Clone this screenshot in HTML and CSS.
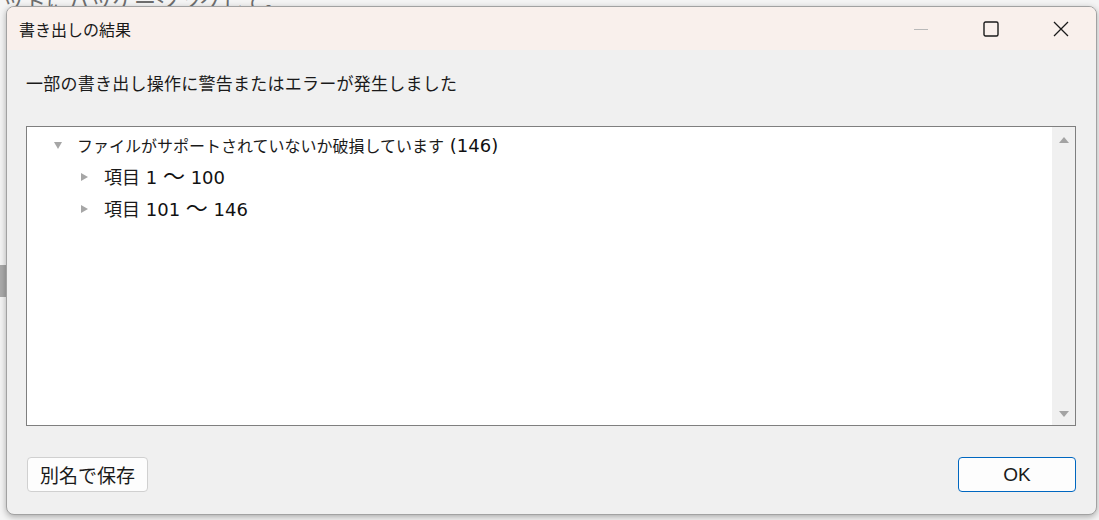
FILE: index.html
```html
<!DOCTYPE html>
<html lang="ja">
<head>
    <meta charset="UTF-8">
    <title>書き出しの結果</title>
    <link rel="stylesheet" href="styles.css">
</head>
<body>

    <!-- hinter dem Dialog -->
    <div class="behind-text">ットにパッケージングして。</div>
    <div class="behind-block"></div>

    <div class="window">
        <!-- Titelleiste -->
        <div class="titlebar">
            <div class="title">書き出しの結果</div>
            <div class="controls">
                <div class="ctl">
                    <svg width="16" height="16" viewBox="0 0 16 16"><path d="M1 8.5h14" stroke="#b9b9b9" stroke-width="1"/></svg>
                </div>
                <div class="ctl">
                    <svg width="16" height="16" viewBox="0 0 16 16"><rect x="1" y="1" width="14" height="14" rx="1.5" fill="none" stroke="#1a1a1a" stroke-width="1.4"/></svg>
                </div>
                <div class="ctl">
                    <svg width="16" height="16" viewBox="0 0 16 16"><path d="M1 1L15 15M15 1L1 15" stroke="#1a1a1a" stroke-width="1.3"/></svg>
                </div>
            </div>
        </div>

        <div class="content">
            <div class="message">一部の書き出し操作に警告またはエラーが発生しました</div>

            <div class="tree-box">
                <div class="tree">
                    <div class="row">
                        <span class="tri down"></span>
                        <span>ファイルがサポートされていないか破損しています<span class="num"> (146)</span></span>
                    </div>
                    <div class="row child">
                        <span class="tri right"></span>
                        <span>項目<span class="num"> 1 <span class="tilde">～</span> 100</span></span>
                    </div>
                    <div class="row child">
                        <span class="tri right"></span>
                        <span>項目<span class="num"> 101 <span class="tilde">～</span> 146</span></span>
                    </div>
                </div>
                <div class="scrollbar">
                    <span class="arrow up"></span>
                    <span class="arrow down"></span>
                </div>
            </div>

            <div class="buttons">
                <button class="btn">別名で保存</button>
                <button class="btn ok">OK</button>
            </div>
        </div>
    </div>

</body>
</html>
```

FILE: styles.css
```css
body {
    margin: 0;
    background-color: #f4f4f4;
    font-family: "Noto Sans CJK JP", "Noto Sans", sans-serif;
    color: #1a1a1a;
    width: 1099px;
    height: 520px;
    overflow: hidden;
    position: relative;
}

.behind-text {
    position: absolute;
    left: 2px;
    top: -16px;
    font-size: 22px;
    color: #6e6e6e;
}

.behind-block {
    position: absolute;
    left: 0;
    top: 265px;
    width: 6px;
    height: 32px;
    background-color: #a9a9a9;
}

/* Dialogfenster */
.window {
    position: relative;
    margin: 6px 0 0 6px;
    width: 1089px;
    height: 507px;
    background-color: #f0f0f0;
    border: 1px solid #a2a2a2;
    border-radius: 8px;
    overflow: hidden;
    box-shadow: 0 2px 6px rgba(0, 0, 0, 0.3);
    display: flex;
    flex-direction: column;
}

.titlebar {
    height: 43px;
    background-color: #f9f0ec;
    display: flex;
    justify-content: space-between;
    align-items: center;
}

.title {
    padding-left: 12px;
    font-size: 16px;
}

.controls {
    display: flex;
    height: 100%;
}

.ctl {
    width: 70px;
    display: flex;
    justify-content: center;
    align-items: center;
}

.content {
    flex: 1;
    display: flex;
    flex-direction: column;
    padding: 0 20px 0 19px;
}

.message {
    margin-top: 21px;
    font-size: 17px;
    letter-spacing: 0.25px;
    line-height: 24px;
}

/* Baumansicht */
.tree-box {
    margin-top: 31px;
    height: 298px;
    background-color: #fff;
    border: 1px solid #7f7f7f;
    display: flex;
}

.tree {
    flex: 1;
    padding-top: 2px;
    font-size: 16px;
    line-height: 24px;
}

.row {
    height: 32px;
    display: flex;
    align-items: center;
    padding-left: 27px;
}

.row.child {
    padding-left: 54px;
    font-size: 18px;
}

.num {
    font-family: "DejaVu Sans", "Noto Sans CJK JP", sans-serif;
    font-size: 18px;
    color: #111;
}

.tilde {
    font-family: "Noto Sans CJK JP", sans-serif;
    font-size: 22px;
    line-height: 0;
}

.tri {
    width: 0;
    height: 0;
}

.tri.down {
    border-left: 4px solid transparent;
    border-right: 4px solid transparent;
    border-top: 7px solid #a6a6a6;
    margin-right: 15px;
}

.tri.right {
    border-top: 4px solid transparent;
    border-bottom: 4px solid transparent;
    border-left: 7px solid #a6a6a6;
    margin-right: 16px;
}

.scrollbar {
    width: 23px;
    background-color: #f0f0f0;
    display: flex;
    flex-direction: column;
    justify-content: space-between;
    align-items: center;
    padding: 10px 0 8px;
}

.arrow {
    width: 0;
    height: 0;
    border-left: 5px solid transparent;
    border-right: 5px solid transparent;
}

.arrow.up { border-bottom: 6px solid #a3a3a3; }
.arrow.down { border-top: 6px solid #a3a3a3; }

/* Schaltflächen */
.buttons {
    margin-top: 31px;
    display: flex;
    justify-content: space-between;
}

.btn {
    height: 35px;
    padding: 0 12px;
    margin-left: 1px;
    background-color: #fdfdfd;
    border: 1px solid #d0d0d0;
    border-radius: 4px;
    font-family: "Noto Sans CJK JP", sans-serif;
    font-size: 19px;
    color: #1a1a1a;
}

.btn.ok {
    width: 118px;
    border-color: #0067c0;
    font-family: "Liberation Sans", sans-serif;
    font-size: 19px;
}
```
